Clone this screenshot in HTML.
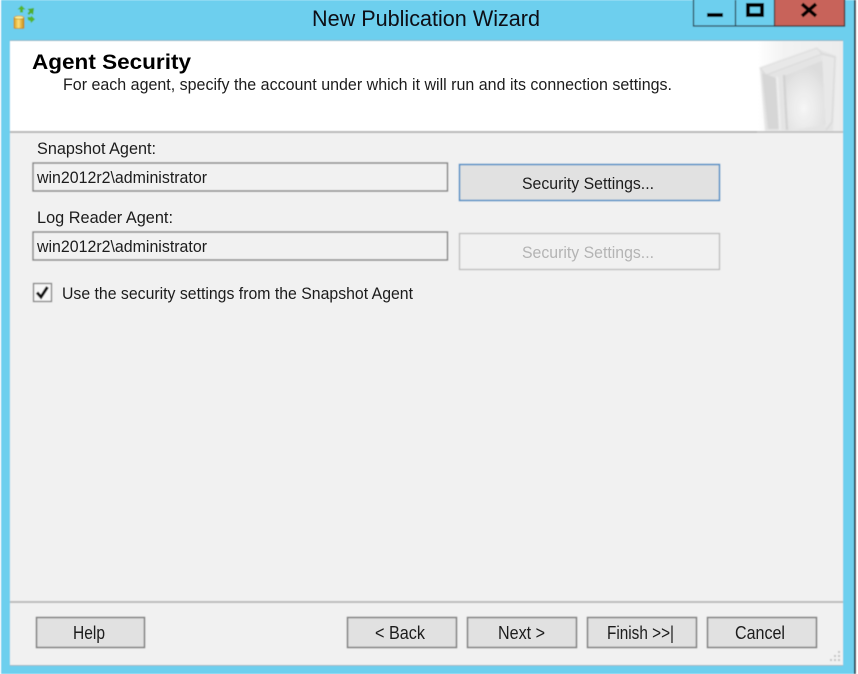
<!DOCTYPE html>
<html><head><meta charset="utf-8"><title>New Publication Wizard</title>
<style>
html,body{margin:0;padding:0;width:858px;height:674px;overflow:hidden;background:#fff}
svg{display:block}
text{font-family:"Liberation Sans",sans-serif;font-size:16.5px;fill:#1e1e1e}
</style></head><body>
<svg width="858" height="674" viewBox="0 0 858 674" xmlns="http://www.w3.org/2000/svg">
<defs>
<filter id="b" x="-5%" y="-5%" width="110%" height="110%"><feGaussianBlur stdDeviation="0.4"/></filter>
<filter id="t" x="-5%" y="-20%" width="110%" height="140%"><feGaussianBlur stdDeviation="0.28"/></filter>
<filter id="b2" x="-20%" y="-20%" width="140%" height="140%"><feGaussianBlur stdDeviation="0.7"/></filter>
<radialGradient id="glow" cx="0.45" cy="0.68" r="0.62"><stop offset="0" stop-color="#f6f6f6"/><stop offset="1" stop-color="#dcdcdc"/></radialGradient>
<linearGradient id="hdr" x1="0" y1="0" x2="1" y2="0"><stop offset="0" stop-color="#fff"/><stop offset="0.3" stop-color="#f3f3f3"/><stop offset="1" stop-color="#ececec"/></linearGradient>
<linearGradient id="can" x1="0" y1="0" x2="1" y2="0"><stop offset="0" stop-color="#d99c1c"/><stop offset="0.45" stop-color="#fde07a"/><stop offset="1" stop-color="#c98a10"/></linearGradient>
</defs>
<g filter="url(#b)">
<rect x="0" y="0" width="858" height="674" fill="#fff"/>
<rect x="1" y="0" width="853" height="674" fill="#6dcfee"/>
<rect x="854" y="0" width="2" height="674" fill="#2c3e4c"/>

<!-- window buttons -->
<rect x="693.5" y="-2" width="151" height="28" fill="#6dcfee" stroke="#2c3a44" stroke-width="1.2"/>
<line x1="735.5" y1="0" x2="735.5" y2="26" stroke="#2c3a44" stroke-width="1.2"/>
<rect x="774.5" y="-2" width="70" height="28" fill="#c8645a" stroke="#3f302e" stroke-width="1.2"/>
<rect x="707" y="13" width="16" height="4" fill="#000"/>
<rect x="748" y="5" width="14" height="10" fill="none" stroke="#000" stroke-width="4"/>
<path d="M802 4L816 16M816 4L802 16" stroke="#000" stroke-width="3.6" fill="none"/>

<!-- app icon -->
<rect x="14" y="17" width="10" height="11.5" rx="1" fill="url(#can)" stroke="#b5841a" stroke-width="0.8"/>
<ellipse cx="19" cy="17.5" rx="4.8" ry="1.7" fill="#fbeb94" stroke="#b98a1c" stroke-width="0.6"/>
<path d="M17.5 9.5L21.5 5.5L25.5 9.5H23V12.5H20V9.5Z" fill="#55b52c"/>
<path d="M27.5 9L34 8L33 15L31 13L29 15L27.5 13.5L29.5 11Z" fill="#4fae2a"/>
<path d="M27.5 17H31V15.5L35 19.2L31 23L30.5 21L28 20Z" fill="#55b52c"/>

<!-- client -->
<rect x="10" y="41" width="833" height="624" fill="#f1f1f1"/>
<rect x="10" y="41" width="833" height="90" fill="#fff"/>
<rect x="10" y="131" width="833" height="2" fill="#b8b8b8"/>
<rect x="10" y="40" width="833" height="1" fill="#8fb6c6"/>
<rect x="10" y="665" width="833" height="1" fill="#9fb6c0"/>
<rect x="10" y="601" width="833" height="2" fill="#bcbcbc"/>

<!-- header art -->
<rect x="757" y="41" width="86" height="90" fill="url(#hdr)"/>
<g filter="url(#b2)">
<path d="M760 69L818 49L836 56L833 131H765Z" fill="#e4e4e4"/>
<path d="M784 76L824 60L828 124L788 131Z" fill="url(#glow)"/>
<path d="M760 68L817 48L822 54L766 75Z" fill="#e8e8e8" stroke="#d4d4d4" stroke-width="0.8"/>
<path d="M762 73L768 129H781L776 78Z" fill="#d6d6d6"/>
<path d="M784 75L787 130" stroke="#c8c8c8" stroke-width="1.5"/>
<path d="M777 77L780 130" stroke="#f0f0f0" stroke-width="2"/>
<path d="M822 54L835 57L832 122L826 130" fill="#e8e8e8" stroke="#d6d6d6" stroke-width="1.2"/>
</g>
<rect x="757" y="131" width="86" height="2" fill="#c4c4c4"/>

<!-- footer buttons -->
<g fill="#e1e1e1" stroke="#7c7c7c" stroke-width="1.5">
<rect x="36.5" y="617.5" width="108" height="30"/>
<rect x="347.5" y="617.5" width="109" height="30"/>
<rect x="467.5" y="617.5" width="109" height="30"/>
<rect x="587.5" y="617.5" width="109" height="30"/>
<rect x="707.5" y="617.5" width="109" height="30"/>
</g>

<!-- fields -->
<rect x="33" y="163" width="414.5" height="28" fill="#f1f1f1" stroke="#7f7f7f" stroke-width="1.4"/>
<rect x="33" y="232" width="414.5" height="28" fill="#f1f1f1" stroke="#7f7f7f" stroke-width="1.4"/>
<rect x="459.5" y="164.5" width="260" height="36" fill="#e1e1e1" stroke="#4a8cc4" stroke-width="1.5"/>
<rect x="459.5" y="233.5" width="260" height="36" fill="#f1f1f1" stroke="#bcbcbc" stroke-width="1.3"/>

<!-- checkbox -->
<rect x="33.5" y="283.5" width="18" height="18" fill="#f6f6f6" stroke="#7f7f7f" stroke-width="1.3"/>
<path d="M37 292.5L41 297L47.5 287" fill="none" stroke="#111" stroke-width="3"/>

<!-- grip -->
<g fill="#c4c4c4">
<rect x="838" y="651" width="2" height="2"/>
<rect x="834" y="655" width="2" height="2"/><rect x="838" y="655" width="2" height="2"/>
<rect x="830" y="659" width="2" height="2"/><rect x="834" y="659" width="2" height="2"/><rect x="838" y="659" width="2" height="2"/>
</g>
</g>

<g filter="url(#t)">
<text x="312" y="26" style="font-size:22px;fill:#0a0e12" textLength="228" lengthAdjust="spacingAndGlyphs">New Publication Wizard</text>
<text x="32" y="69" style="font-size:21.5px;font-weight:bold;fill:#000" textLength="159" lengthAdjust="spacingAndGlyphs">Agent Security</text>
<text x="63" y="90" textLength="609" lengthAdjust="spacingAndGlyphs">For each agent, specify the account under which it will run and its connection settings.</text>
<text x="37" y="154" textLength="119" lengthAdjust="spacingAndGlyphs">Snapshot Agent:</text>
<text x="37" y="183" textLength="170" lengthAdjust="spacingAndGlyphs">win2012r2\administrator</text>
<text x="37" y="223" textLength="136" lengthAdjust="spacingAndGlyphs">Log Reader Agent:</text>
<text x="37" y="252" textLength="170" lengthAdjust="spacingAndGlyphs">win2012r2\administrator</text>
<text x="522" y="189" textLength="132" lengthAdjust="spacingAndGlyphs">Security Settings...</text>
<text x="522" y="258" style="fill:#b4b4b4" textLength="132" lengthAdjust="spacingAndGlyphs">Security Settings...</text>
<text x="62" y="299" textLength="351" lengthAdjust="spacingAndGlyphs">Use the security settings from the Snapshot Agent</text>
<text x="73" y="639" style="font-size:18px" textLength="32" lengthAdjust="spacingAndGlyphs">Help</text>
<text x="375" y="639" style="font-size:18px" textLength="50" lengthAdjust="spacingAndGlyphs">&lt; Back</text>
<text x="498" y="639" style="font-size:18px" textLength="47" lengthAdjust="spacingAndGlyphs">Next &gt;</text>
<text x="607" y="639" style="font-size:18px" textLength="67" lengthAdjust="spacingAndGlyphs">Finish &gt;&gt;|</text>
<text x="735" y="639" style="font-size:18px" textLength="50" lengthAdjust="spacingAndGlyphs">Cancel</text>
</g>
</svg>
</body></html>
